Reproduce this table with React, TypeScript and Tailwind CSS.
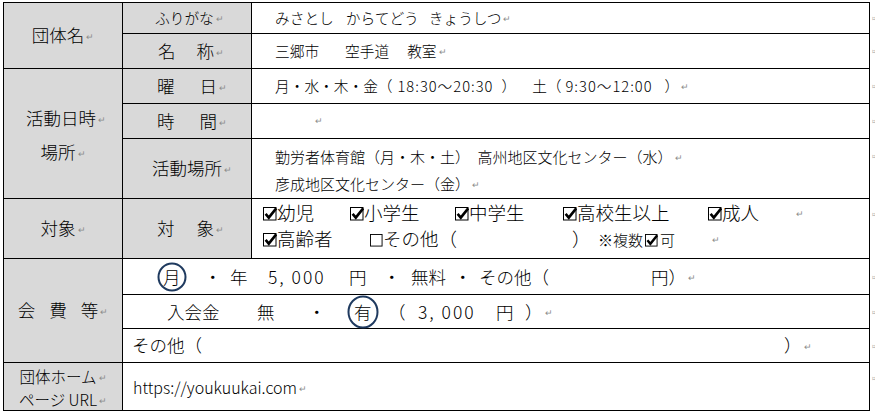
import React from "react";

const cell = "border-r border-b border-black";
const gray = "bg-[#d9d9d9]";

// Word paragraph mark
const R = () => (
  <span className="ml-[2px] inline-block align-middle font-['DejaVu_Sans'] text-[9px] leading-none text-[#8c8c8c]">↵</span>
);

function Box({ checked = true, size = 14 }: { checked?: boolean; size?: number }) {
  return (
    <svg width={size} height={size} viewBox="0 0 14 14" className="inline-block align-[-1px]">
      <rect x="0.5" y="0.5" width="12.5" height="12.5" fill="none" stroke="#000" strokeWidth="1" />
      {checked && <path d="M2.6 6.8 L5.8 10.6 L13.2 1.4" fill="none" stroke="#000" strokeWidth="2.6" />}
    </svg>
  );
}

function Circled({ ch, ring }: { ch: string; ring: string }) {
  return (
    <span className="relative inline-block">
      {ch}
      <span
        className={`absolute left-1/2 top-1/2 -translate-x-1/2 -translate-y-1/2 rounded-[50%] border-2 border-[#1f3a5f] ${ring}`}
      />
    </span>
  );
}

export default function App() {
  return (
    <div className="flex bg-white pl-[3px] pt-[2px] font-['Noto_Sans_CJK_JP',sans-serif] font-light text-black">
      <div className="grid w-[867px] grid-cols-[119px_129px_1fr] grid-rows-[31px_35px_35px_35px_60px_60px_36px_34px_34px_48px] border-l border-t border-black whitespace-nowrap">
        {/* 団体名 */}
        <div className={`row-span-2 ${cell} ${gray} flex items-center justify-center text-[17.5px]`}>
          <div>団体名<R /></div>
        </div>
        <div className={`${cell} ${gray} flex items-center pl-[32px] text-[14.7px]`}>
          <div>ふりがな<R /></div>
        </div>
        <div className={`${cell} flex items-center pl-[23px] text-[14.7px]`}>
          <div>
            みさとし<span className="ml-[12px]">からてどう</span>
            <span className="ml-[10px]">きょうしつ</span>
            <R />
          </div>
        </div>
        <div className={`${cell} ${gray} flex items-center pl-[35px] text-[17.5px]`}>
          <div>
            名<span className="ml-[21px]">称</span>
            <R />
          </div>
        </div>
        <div className={`${cell} flex items-center pl-[23px] text-[14.7px]`}>
          <div>
            三郷市<span className="ml-[26px]">空手道</span>
            <span className="ml-[18px]">教室</span>
            <R />
          </div>
        </div>

        {/* 活動日時・場所 */}
        <div className={`row-span-3 ${cell} ${gray} flex flex-col items-center justify-center pt-[3px] text-[17.5px] leading-[34px]`}>
          <div className="pl-[6px]">活動日時<R /></div>
          <div>場所<R /></div>
        </div>
        <div className={`${cell} ${gray} flex items-center pl-[34px] text-[17.5px]`}>
          <div>
            曜<span className="ml-[25px]">日</span>
            <R />
          </div>
        </div>
        <div className={`${cell} flex items-center pl-[23px] text-[14.7px]`}>
          <div>
            月・水・木・金（<span className="ml-[5px] tracking-[1px]">18:30～20:30</span>
            <span className="ml-[8px]">）</span>
            <span className="ml-[16px]">土（</span>
            <span className="ml-[4px] tracking-[1px]">9:30～12:00</span>
            <span className="ml-[12px]">）</span>
            <R />
          </div>
        </div>
        <div className={`${cell} ${gray} flex items-center pl-[34px] text-[17.5px]`}>
          <div>
            時<span className="ml-[25px]">間</span>
            <R />
          </div>
        </div>
        <div className={`${cell} flex items-center pl-[61px] text-[14.7px]`}>
          <R />
        </div>
        <div className={`${cell} ${gray} flex items-center pl-[29px] text-[17.5px]`}>
          <div>活動場所<R /></div>
        </div>
        <div className={`${cell} flex flex-col justify-center pl-[23px] pt-[2px] text-[15px] leading-[27px]`}>
          <div>勤労者体育館（月・木・土）　高州地区文化センター（水）<R /></div>
          <div>彦成地区文化センター（金）<R /></div>
        </div>

        {/* 対象 */}
        <div className={`${cell} ${gray} flex items-center justify-center text-[17.5px]`}>
          <div>対象<R /></div>
        </div>
        <div className={`${cell} ${gray} flex items-center pl-[34px] text-[17.5px]`}>
          <div>
            対<span className="ml-[22px]">象</span>
            <R />
          </div>
        </div>
        <div className={`${cell} flex flex-col pl-[11px] text-[18.5px] leading-[26px]`}>
          <div>
            <span className="inline-block w-[87px]"><Box />幼児</span>
            <span className="inline-block w-[105px]"><Box />小学生</span>
            <span className="inline-block w-[108px]"><Box />中学生</span>
            <span className="inline-block w-[145px]"><Box />高校生以上</span>
            <span className="inline-block w-[86px]"><Box />成人</span>
            <R />
          </div>
          <div>
            <span className="inline-block w-[107px]"><Box />高齢者</span>
            <span className="inline-block w-[202px]"><Box checked={false} size={13} />その他（</span>
            <span className="inline-block w-[26px]">）</span>
            <span className="inline-block w-[47px] text-[15px]">※複数</span>
            <span className="inline-block w-[15px]"><Box size={13} /></span>
            <span className="inline-block w-[50px] text-[15px]">可</span>
            <R />
          </div>
        </div>

        {/* 会費等 */}
        <div className={`row-span-3 ${cell} ${gray} flex items-center justify-center text-[17.5px]`}>
          <div>
            会<span className="ml-[14px]">費</span>
            <span className="ml-[14px]">等</span>
            <R />
          </div>
        </div>
        <div className={`col-span-2 ${cell} flex items-center pl-[40px] text-[17.5px] leading-[22px]`}>
          <div>
            <span className="inline-block w-[41px]"><Circled ch="月" ring="h-[29px] w-[29px]" /></span>
            <span className="inline-block w-[26px]">・</span>
            <span className="inline-block w-[38px]">年</span>
            <span className="inline-block w-[81px] tracking-[2px]">5, 000</span>
            <span className="inline-block w-[34px]">円</span>
            <span className="inline-block w-[28px]">・</span>
            <span className="inline-block w-[43px]">無料</span>
            <span className="inline-block w-[25px]">・</span>
            <span className="inline-block w-[172px]">その他（</span>
            円）<R />
          </div>
        </div>
        <div className={`col-span-2 ${cell} flex items-center pl-[44px] text-[17.5px] leading-[22px]`}>
          <div>
            <span className="inline-block w-[90px]">入会金</span>
            <span className="inline-block w-[51px]">無</span>
            <span className="inline-block w-[46px]">・</span>
            <span className="inline-block w-[34px]"><Circled ch="有" ring="h-[33px] w-[31px]" /></span>
            <span className="inline-block w-[30px]">（</span>
            <span className="inline-block w-[78px] tracking-[2px]">3, 000</span>
            <span className="inline-block w-[29px]">円</span>
            ）<R />
          </div>
        </div>
        <div className={`col-span-2 ${cell} flex items-center pl-[9px] text-[17.5px]`}>
          <div>
            <span className="inline-block w-[652px]">その他（</span>
            ）<R />
          </div>
        </div>

        {/* ホームページ */}
        <div className={`${cell} ${gray} flex flex-col items-center justify-center pt-[2px] text-[15.5px] leading-[22.5px]`}>
          <div>団体ホーム<R /></div>
          <div>ページ URL<R /></div>
        </div>
        <div className={`col-span-2 ${cell} flex items-center pl-[10px] text-[16px]`}>
          <div>https://youkuukai.com<R /></div>
        </div>
      </div>

      {/* end-of-row marks */}
      <div className="grid w-[5px] grid-rows-[31px_35px_35px_35px_60px_60px_36px_34px_34px_48px] pt-[1px] text-[7px] leading-none text-[#9a9a9a]">
        <div className="pl-[2px] pt-[12px]">¤</div>
        <div className="pl-[2px] pt-[14px]">¤</div>
        <div className="pl-[2px] pt-[14px]">¤</div>
        <div className="pl-[2px] pt-[14px]">¤</div>
        <div className="pl-[2px] pt-[14px]">¤</div>
        <div className="pl-[2px] pt-[12px]">¤</div>
        <div className="pl-[2px] pt-[15px]">¤</div>
        <div className="pl-[2px] pt-[14px]">¤</div>
        <div className="pl-[2px] pt-[14px]">¤</div>
        <div className="pl-[2px] pt-[12px]">¤</div>
      </div>
    </div>
  );
}
